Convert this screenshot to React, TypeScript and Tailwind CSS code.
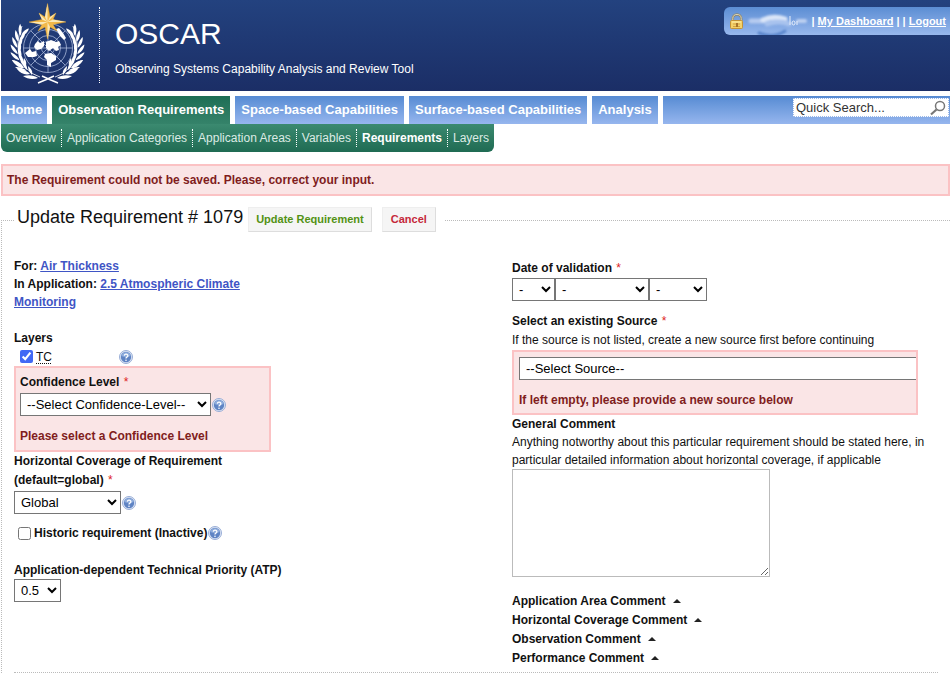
import React, { useState } from "react";

const NAV = [
  { label: "Home", pad: "px-[5px]" },
  { label: "Observation Requirements", pad: "px-[6px]", active: true },
  { label: "Space-based Capabilities", pad: "px-[6px]" },
  { label: "Surface-based Capabilities", pad: "px-[6px]" },
  { label: "Analysis", pad: "px-[6px]" },
];

const SUBNAV = [
  { label: "Overview" },
  { label: "Application Categories" },
  { label: "Application Areas" },
  { label: "Variables" },
  { label: "Requirements", active: true },
  { label: "Layers" },
];

const COMMENTS = [
  "Application Area Comment",
  "Horizontal Coverage Comment",
  "Observation Comment",
  "Performance Comment",
];

const LEAF_ANGLES = [148, 160, 172, 184, 196, 208, 220];

function Branch() {
  return (
    <g fill="#fff">
      <path d="M40 77 Q24 72 19 54 Q16 40 22 26" fill="none" stroke="#fff" strokeWidth=".8" />
      {LEAF_ANGLES.map((a) => {
        const r = (a * Math.PI) / 180;
        const x = 47.5 + 30 * Math.cos(r);
        const y = 49 - 30 * Math.sin(r);
        return (
          <g key={a} transform={`translate(${x} ${y}) rotate(${180 - a})`}>
            <path d="M0 3 C-4 1.500 -6.500 -3 -6.500 -7 C-3.500 -5 -.5 -1 0 3Z" />
            <path d="M1 3 C-.5 0 .5 -5 3.500 -7.500 C4.500 -4 3.500 0 1 3Z" />
          </g>
        );
      })}
      <path d="M24 68 C19 68.500 15 65 12 60 C17 61 22 63.500 24 68Z" />
      <path d="M30 74 C25 75.500 20 73 17 69 C22 69 27 70.500 30 74Z" />
      <path d="M38 78 C33 80 27 79 23 76 C29 74.500 34 75 38 78Z" />
      <path d="M25 68 C23 64 23 61 24 58 C26.500 61 27 64 25 68Z" />
      <path d="M32 75 C29 72 28 69 28 66 C31 68.500 33 71 32 75Z" />
    </g>
  );
}

function Emblem() {
  return (
    <svg viewBox="0 0 96 90" className="h-[90px] w-24 shrink-0" role="img" aria-label="World Meteorological Organization">
      <g fill="none" stroke="#a9b9db" strokeWidth=".8">
        <circle cx="47" cy="48" r="24.500" />
        <circle cx="47" cy="48" r="18.500" />
        <circle cx="47" cy="48" r="12.500" />
        <circle cx="47" cy="48" r="6.500" />
        <path d="M22.500 48H71.500M47 24V72.500M29.700 30.700 64.300 65.300M29.700 65.300 64.300 30.700" />
      </g>
      <g fill="#fff">
        <path d="M34 44 37 41 39 43 43 41 43 46 40 49 36 50 33 47Z" />
        <path d="M45 42 50 40 55 42 58 41 60 45 57 47 58 50 55 51 52 48 48 51 45 48Z" />
        <path d="M44 54 50 53 55 56 55 60 50 63 50 67 46 65 46 60 43 57Z" />
        <path d="M24 53 29 49 31 52 35 51 36 56 33 57 27 57Z" />
        <path d="M55 29 58 28 62 33 65 38 63 40 59 36Z" />
      </g>
      <g transform="translate(-1 0)">
        <Branch />
      </g>
      <g transform="translate(94 0) scale(-1 1)">
        <Branch />
      </g>
      <path d="M37 83 Q47 79 53 76M57 83 Q47 79 41 76" fill="none" stroke="#fff" strokeWidth="1.500" />
      <path
        d="M46.500 3.500 49 17 55 13 52 19.500 65 22 52 24.500 56 31 49 27 46.500 39 44 27 37 31 41 24.500 28 22 41 19.500 38 13 44 17Z"
        fill="#f2b849"
        stroke="#e9a92c"
        strokeWidth=".4"
      />
      <path d="M46.500 3.500V22L44 17ZM65 22H46.500L52 19.500ZM46.500 39V22L49 27ZM28 22H46.500L41 24.500ZM38 13 46.500 22 41 19.500ZM55 13 46.500 22 49 17Z" fill="#fbe8b5" />
    </svg>
  );
}

function LockIcon() {
  return (
    <svg viewBox="0 0 16 16" className="h-4 w-4 shrink-0" aria-hidden="true">
      <path d="M3.800 8V5.500a4.200 4 0 0 1 8.400 0V8" fill="none" stroke="#8b8368" strokeWidth="2.400" />
      <path d="M3.800 8V5.500a4.200 4 0 0 1 8.400 0V8" fill="none" stroke="#ded8bd" strokeWidth="1" />
      <rect x="1.500" y="7.500" width="12" height="8" rx="1" fill="#f3d169" stroke="#c39338" />
      <path d="M3 9h9" stroke="#fff0b0" />
      <path d="M4 11h7M4 13.500h7" stroke="#d1a346" />
      <path d="M7 10h2v4H7z" fill="#a8742a" />
    </svg>
  );
}

function UserSmudge() {
  return (
    <svg viewBox="0 0 66 28" className="h-7 w-[66px] shrink-0" aria-hidden="true">
      <defs>
        <filter id="soft" x="-20%" y="-40%" width="140%" height="180%">
          <feGaussianBlur stdDeviation="1.300" />
        </filter>
      </defs>
      <g filter="url(#soft)" fill="none" strokeLinecap="round">
        <path d="M14 26Q28 32 40 24" stroke="#5884cb" strokeWidth="3" />
        <path d="M6 14H18" stroke="#b5caef" strokeWidth="5" />
        <path d="M18 13Q28 8 40 12" stroke="#dbe6f8" strokeWidth="5" />
        <path d="M22 17Q34 13 44 17" stroke="#a9c3ee" strokeWidth="5" />
        <path d="M53 14H60" stroke="#bdd0f1" strokeWidth="4" />
      </g>
      <path d="M45 9V18M52 14v4M48.500 14a1.500 2 0 1 0 .1 0" fill="none" stroke="#e8effb" />
    </svg>
  );
}

function SearchIcon() {
  return (
    <svg viewBox="0 0 16 16" className="h-4 w-4" fill="none" stroke="#777" aria-hidden="true">
      <circle cx="10" cy="6" r="4.500" strokeWidth="1.500" />
      <path d="M6.500 9.500 1 14.500" strokeWidth="2.200" />
    </svg>
  );
}

function Help() {
  return (
    <button type="button" aria-label="Help" className="h-4 w-4 shrink-0">
      <svg viewBox="0 0 16 16" className="h-4 w-4" aria-hidden="true">
        <circle cx="8" cy="8" r="6.500" fill="#dfe7f5" stroke="#8ea6d3" strokeWidth=".9" />
        <circle cx="8" cy="8" r="5.200" fill="#5f84c4" />
        <path d="M3.300 7a4.800 4.600 0 0 1 9.400 0Q8 9 3.300 7Z" fill="#8eacdc" />
        <path d="M6.300 6.600a1.800 1.600 0 1 1 2.600 1.500Q8 8.600 8 9.500" fill="none" stroke="#fff" strokeWidth="1.300" />
        <circle cx="8" cy="11.300" r=".8" fill="#fff" />
      </svg>
    </button>
  );
}

function Star() {
  return <span className="ml-px font-normal text-[#d22]"> *</span>;
}

const selectClass = "h-[23px] border border-[#767676] bg-white pl-[2px] text-[13px] font-normal text-black";

export default function App() {
  const [tc, setTc] = useState(true);
  const [historic, setHistoric] = useState(false);

  return (
    <div className="overflow-hidden bg-white pl-px font-['Liberation_Sans',Arial,sans-serif] text-[12px] leading-[18px] text-[#111]">
      <header className="flex h-[91px] items-start bg-linear-to-b from-[#23427f] to-[#1b2e66]">
        <Emblem />
        <div className="mt-[7px] ml-[2px] h-[76px] border-l border-dotted border-white" />
        <div className="mt-4 ml-[15px] grow text-white">
          <h1 className="text-[30px] leading-9">OSCAR</h1>
          <p className="mt-2">Observing Systems Capability Analysis and Review Tool</p>
        </div>
        <div className="mt-[7px] flex h-7 items-center rounded-l-md bg-linear-to-b from-[#5b8dd3] to-[#98b8ed] pr-1 pl-[5px] text-[11px] font-bold whitespace-nowrap text-white">
          <LockIcon />
          <UserSmudge />
          <span>
            | <a href="#dashboard" className="underline">My Dashboard</a> | | <a href="#logout" className="underline">Logout</a>
          </span>
        </div>
      </header>

      <nav aria-label="Main" className="mt-[5px] flex h-7 gap-[5px] text-[13px] leading-7 font-bold whitespace-nowrap text-white">
        {NAV.map((item) => (
          <a
            key={item.label}
            href="#nav"
            className={`bg-linear-to-b ${item.active ? "from-[#1c6e55] to-[#35836a]" : "from-[#568bd3] to-[#96b6ee]"} ${item.pad}`}
          >
            {item.label}
          </a>
        ))}
        <form role="search" className="flex grow items-start justify-end bg-linear-to-b from-[#568bd3] to-[#96b6ee] pt-[2px] pr-px" onSubmit={(e) => e.preventDefault()}>
          <div className="flex h-[19px] w-[156px] items-center border border-dotted border-[#9db9e8] bg-white px-[2px]">
            <input aria-label="Quick search" defaultValue="Quick Search..." className="w-0 grow text-[13px] leading-4 font-normal text-[#333] outline-none" />
            <button type="submit" aria-label="Search">
              <SearchIcon />
            </button>
          </div>
        </form>
      </nav>
      <nav aria-label="Section" className="flex h-7 w-fit items-center rounded-b-md bg-linear-to-b from-[#3b8a70] to-[#1f6b53] whitespace-nowrap text-[#dcebe5]">
        {SUBNAV.map((item, i) => (
          <a
            key={item.label}
            href="#section"
            className={`px-[5px] ${i ? "border-l border-dotted border-white" : ""} ${item.active ? "font-bold text-white" : ""}`}
          >
            {item.label}
          </a>
        ))}
      </nav>

      <div role="alert" className="mt-3 border-2 border-[#fbc2c4] bg-[#fae5e6] px-1 py-[5px] font-bold text-[#801d1d]">
        The Requirement could not be saved. Please, correct your input.
      </div>

      <form onSubmit={(e) => e.preventDefault()}>
        <fieldset className="mt-[11px] border-t border-l border-dotted border-[#bbb] pl-3">
          <legend className="flex h-[26px] items-start pr-[9px] pl-[3px]">
            <h2 className="text-[18px] leading-5">Update Requirement # 1079</h2>
            <button type="submit" className="ml-[5px] h-[25px] border border-t-[#eee] border-r-[#ddd] border-b-[#ddd] border-l-[#eee] bg-[#f5f5f5] px-[7px] text-[11px] leading-[23px] font-bold text-[#529214]">
              Update Requirement
            </button>
            <button type="button" className="ml-[10px] h-[25px] border border-t-[#eee] border-r-[#ddd] border-b-[#ddd] border-l-[#eee] bg-[#f5f5f5] px-2 text-[11px] leading-[23px] font-bold text-[#c5283a]">
              Cancel
            </button>
          </legend>

          <div className="mr-3 flex justify-between border-b border-dotted border-[#bbb] pt-6 pb-[5px] font-bold">
            <div className="w-[272px]">
              <div className="w-[240px]">
                <p>
                  For: <a href="#variable" className="text-[#3f55c5] underline">Air Thickness</a>
                </p>
                <p>
                  In Application: <a href="#application" className="text-[#3f55c5] underline">2.5 Atmospheric Climate Monitoring</a>
                </p>
              </div>

              <p className="mt-[18px]">Layers</p>
              <div className="flex h-[19px] items-center pl-[6px] font-normal">
                <input id="tc" type="checkbox" checked={tc} onChange={(e) => setTc(e.target.checked)} className="h-[13px] w-[13px] accent-[#4169f5]" />
                <label htmlFor="tc" className="ml-[3px] w-[82px]">
                  <abbr className="underline decoration-dotted underline-offset-2">TC</abbr>
                </label>
                <Help />
              </div>

              <div className="w-[257px] border-2 border-[#fbc2c4] bg-[#fae5e6] px-1 py-[5px]">
                <label htmlFor="confidence">Confidence Level<Star /></label>
                <div className="mt-[2px] flex items-center">
                  <select id="confidence" className={`${selectClass} w-[191px]`}>
                    <option>--Select Confidence-Level--</option>
                  </select>
                  <Help />
                </div>
                <p className="mt-[11px] text-[#801d1d]">Please select a Confidence Level</p>
              </div>

              <label htmlFor="coverage" className="block w-[240px] leading-[19px]">Horizontal Coverage of Requirement (default=global)<Star /></label>
              <div className="mt-px flex items-center">
                <select id="coverage" className={`${selectClass} w-[107px]`}>
                  <option>Global</option>
                </select>
                <Help />
              </div>

              <div className="mt-[10px] flex items-center pl-1">
                <input id="historic" type="checkbox" checked={historic} onChange={(e) => setHistoric(e.target.checked)} className="h-[13px] w-[13px]" />
                <label htmlFor="historic" className="ml-[3px]">Historic requirement (Inactive)</label>
                <Help />
              </div>

              <label htmlFor="priority" className="mt-[19px] block">Application-dependent Technical Priority (ATP)</label>
              <select id="priority" className={`${selectClass} block w-[47px]`}>
                <option>0.5</option>
              </select>
            </div>

            <div className="w-[426px] pt-[2px]">
              <p>Date of validation<Star /></p>
              <div className="mt-px flex">
                <select aria-label="Day" className={`${selectClass} w-[43px]`}>
                  <option>-</option>
                </select>
                <select aria-label="Month" className={`${selectClass} w-[94px]`}>
                  <option>-</option>
                </select>
                <select aria-label="Year" className={`${selectClass} w-[58px]`}>
                  <option>-</option>
                </select>
              </div>

              <label htmlFor="source" className="mt-[11px] block">Select an existing Source<Star /></label>
              <p className="leading-5 font-normal">If the source is not listed, create a new source first before continuing</p>
              <div className="w-[406px] overflow-hidden border-2 border-[#fbc2c4] bg-[#fae5e6] pt-[5px] pb-[4px] pl-[5px]">
                <select id="source" className={`${selectClass} block w-[640px] max-w-none`}>
                  <option>--Select Source--</option>
                </select>
                <p className="mt-[11px] text-[#801d1d]">If left empty, please provide a new source below</p>
              </div>

              <label htmlFor="comment" className="block">General Comment</label>
              <p className="font-normal">
                Anything notworthy about this particular requirement should be stated here, in particular detailed information about horizontal coverage, if applicable
              </p>
              <textarea id="comment" className="block h-[108px] w-[258px] border border-[#bbb] bg-white" />

              <div className="mt-[14px] flex flex-col items-start">
                {COMMENTS.map((c) => (
                  <button key={c} type="button" className="flex h-[19px] items-center gap-[7px] font-bold">
                    {c}
                    <svg viewBox="0 0 8 4" className="h-1 w-2" aria-hidden="true">
                      <path d="M0 4 4 0 8 4Z" fill="#222" />
                    </svg>
                  </button>
                ))}
              </div>
            </div>
          </div>
        </fieldset>
      </form>
    </div>
  );
}
